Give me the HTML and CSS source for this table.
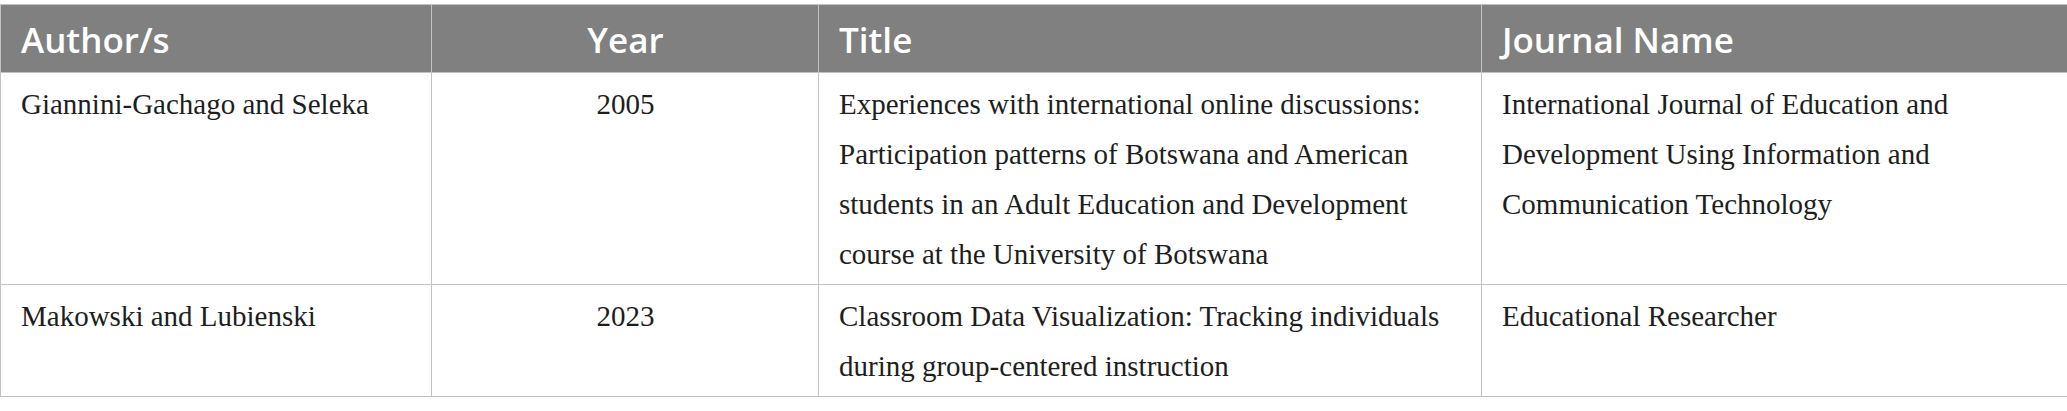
FILE: index.html
```html
<!DOCTYPE html>
<html>
<head>
<meta charset="utf-8">
<link rel="stylesheet" href="styles.css">
</head>
<body>
<table class="refs">
  <colgroup>
    <col class="c-author">
    <col class="c-year">
    <col class="c-title">
    <col class="c-journal">
  </colgroup>
  <thead>
    <tr>
      <th>Author/s</th>
      <th class="center">Year</th>
      <th>Title</th>
      <th>Journal Name</th>
    </tr>
  </thead>
  <tbody>
    <tr>
      <td>Giannini-Gachago and Seleka</td>
      <td class="center">2005</td>
      <td>Experiences with international online discussions: Participation patterns of Botswana and American students in an Adult Education and Development course at the University of Botswana</td>
      <td>International Journal of Education and Development Using Information and Communication Technology</td>
    </tr>
    <tr>
      <td>Makowski and Lubienski</td>
      <td class="center">2023</td>
      <td>Classroom Data Visualization: Tracking individuals during group-centered instruction</td>
      <td>Educational Researcher</td>
    </tr>
  </tbody>
</table>
</body>
</html>
```

FILE: styles.css
```css
html, body {
  margin: 0;
  padding: 0;
  background: #ffffff;
}

body {
  padding-top: 4px;
}

.refs {
  width: 2067px;
  border-collapse: collapse;
  table-layout: fixed;
  border: 1px solid #c2c2c2;
}

.c-author { width: 431px; }
.c-year { width: 387px; }
.c-title { width: 663px; }
.c-journal { width: 586px; }

.refs th {
  background: #7f807f;
  color: #ffffff;
  font-family: "Open Sans", "Noto Sans", sans-serif;
  font-weight: 600;
  font-size: 35px;
  line-height: 49px;
  text-align: left;
  padding: 10px 19px 8px 20px;
  border: 1px solid #c2c2c2;
}

.refs td {
  font-family: "Liberation Serif", "Times New Roman", serif;
  font-size: 29px;
  line-height: 50px;
  color: #1e1e1e;
  vertical-align: top;
  padding: 6px 19px 5px 20px;
  border: 1px solid #c2c2c2;
}

.refs .center {
  text-align: center;
}
```
